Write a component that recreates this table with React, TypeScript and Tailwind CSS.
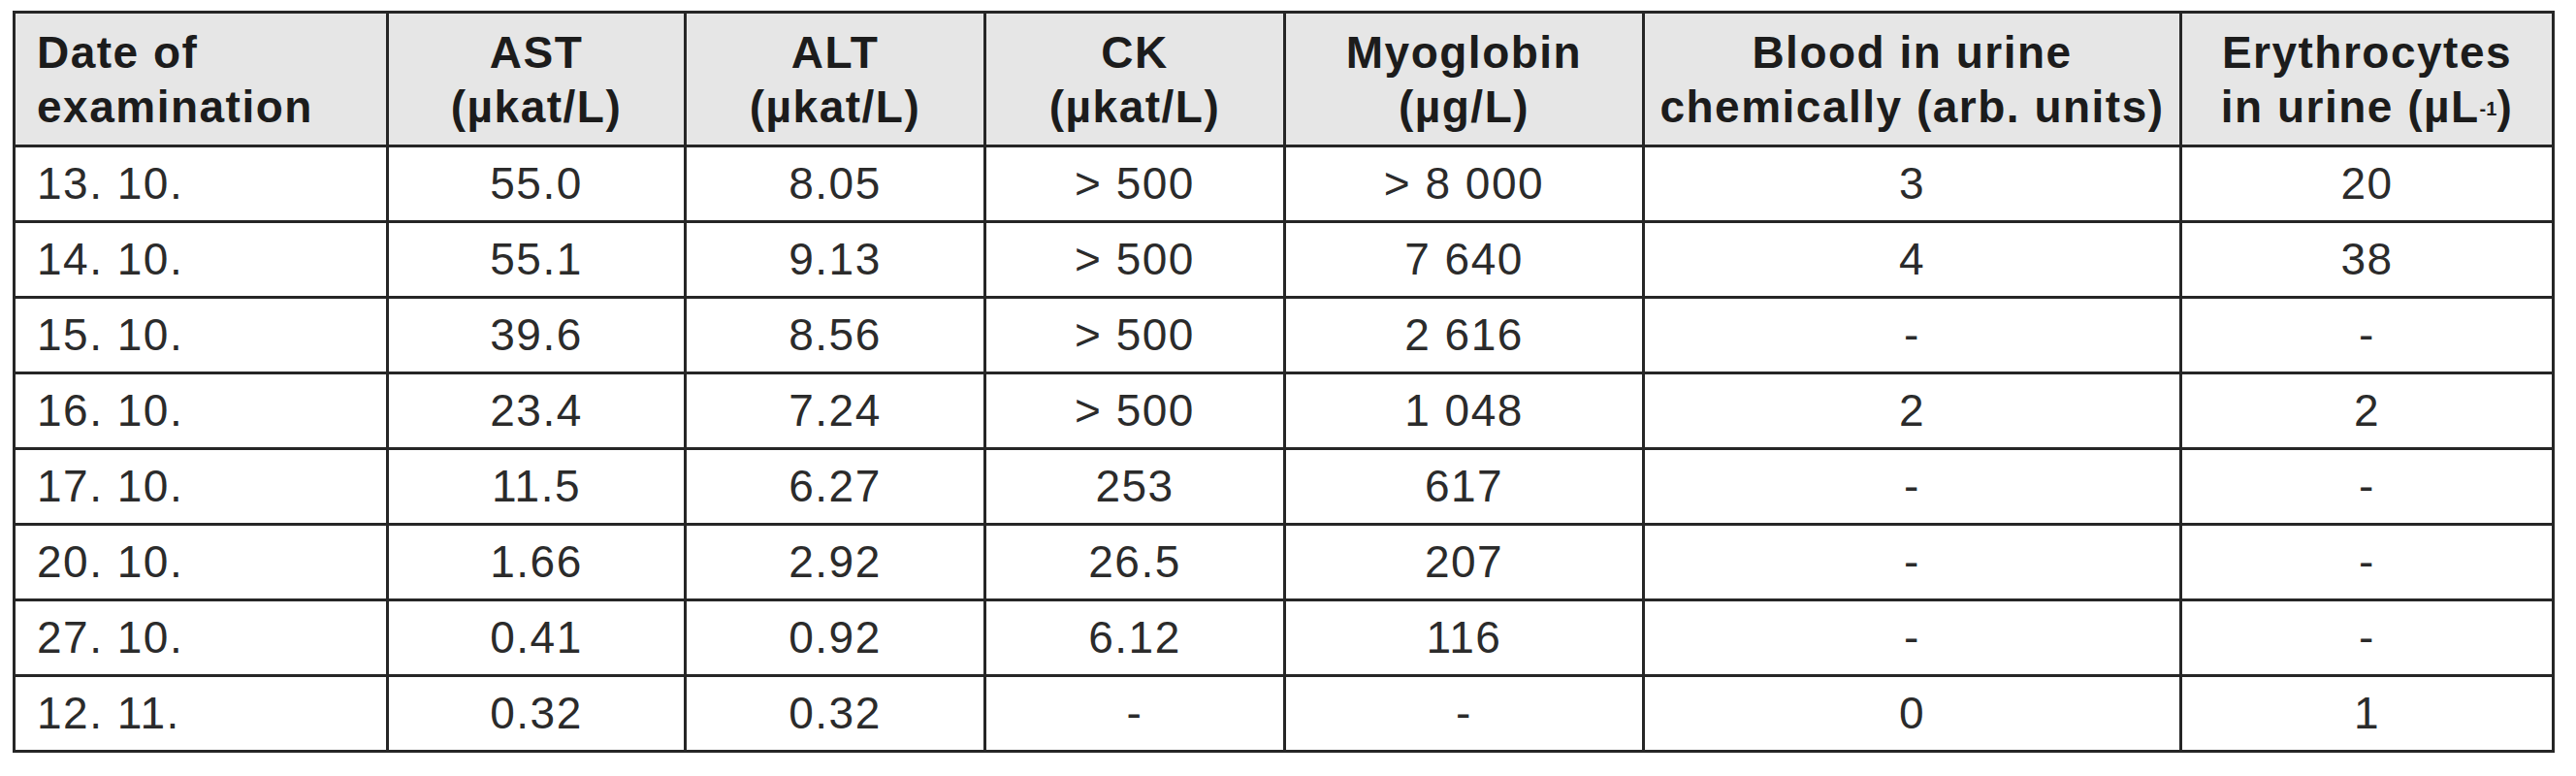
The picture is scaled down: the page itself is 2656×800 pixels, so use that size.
import React from "react";

type Row = [string, string, string, string, string, string, string];

const rows: Row[] = [
  ["13. 10.", "55.0", "8.05", "> 500", "> 8 000", "3", "20"],
  ["14. 10.", "55.1", "9.13", "> 500", "7 640", "4", "38"],
  ["15. 10.", "39.6", "8.56", "> 500", "2 616", "-", "-"],
  ["16. 10.", "23.4", "7.24", "> 500", "1 048", "2", "2"],
  ["17. 10.", "11.5", "6.27", "253", "617", "-", "-"],
  ["20. 10.", "1.66", "2.92", "26.5", "207", "-", "-"],
  ["27. 10.", "0.41", "0.92", "6.12", "116", "-", "-"],
  ["12. 11.", "0.32", "0.32", "-", "-", "0", "1"],
];

// column widths incl. the 3px right rule
const widths = [
  "w-[385px]",
  "w-[307px]",
  "w-[309px]",
  "w-[309px]",
  "w-[370px]",
  "w-[554px]",
  "w-[384px]",
];

const th =
  "border-r-[3px] border-b-[3px] border-[#262626] bg-[#e6e6e6] font-bold leading-[56px] text-[#1c1c1c] align-middle";
const td =
  "h-[78px] border-r-[3px] border-b-[3px] border-[#262626] text-[#2b2b2b] align-middle";

export default function App() {
  return (
    <div className="min-h-[800px] w-[2656px] bg-white pl-[13px] pt-[11px]">
      <table className="table-fixed w-[2621px] border-separate border-spacing-0 border-t-[3px] border-l-[3px] border-[#262626] font-['Liberation_Sans',Arial,sans-serif] text-[46px] tracking-[1.5px]">
        <thead>
          <tr>
            <th className={`${th} ${widths[0]} h-[138px] pl-[22px] text-left`}>
              Date of
              <br />
              examination
            </th>
            <th className={`${th} ${widths[1]} text-center`}>
              AST
              <br />
              (µkat/L)
            </th>
            <th className={`${th} ${widths[2]} text-center`}>
              ALT
              <br />
              (µkat/L)
            </th>
            <th className={`${th} ${widths[3]} text-center`}>
              CK
              <br />
              (µkat/L)
            </th>
            <th className={`${th} ${widths[4]} text-center`}>
              Myoglobin
              <br />
              (µg/L)
            </th>
            <th className={`${th} ${widths[5]} whitespace-nowrap text-center`}>
              Blood in urine
              <br />
              chemically (arb. units)
            </th>
            <th className={`${th} ${widths[6]} whitespace-nowrap text-center`}>
              Erythrocytes
              <br />
              in urine (µL
              <sup className="relative -top-[7px] text-[20px] tracking-normal">-1</sup>)
            </th>
          </tr>
        </thead>
        <tbody>
          {rows.map((r) => (
            <tr key={r[0]}>
              {r.map((v, i) => (
                <td
                  key={i}
                  className={`${td} ${i === 0 ? "pl-[22px] text-left" : "text-center"}`}
                >
                  {v}
                </td>
              ))}
            </tr>
          ))}
        </tbody>
      </table>
    </div>
  );
}
